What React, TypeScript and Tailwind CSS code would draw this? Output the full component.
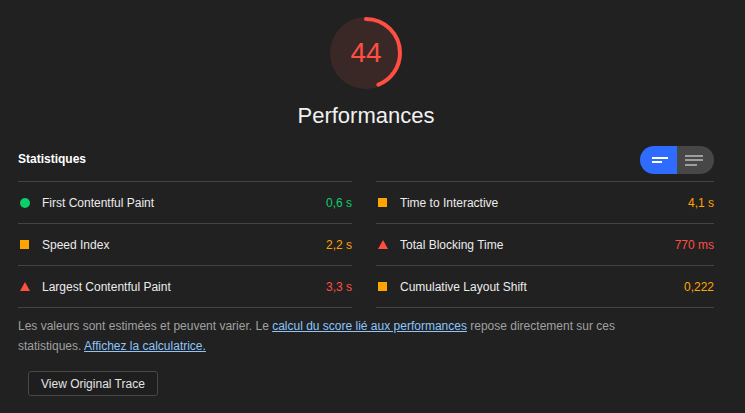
import React from "react";

type Kind = "pass" | "average" | "fail";
const metrics: { label: string; value: string; kind: Kind }[][] = [
  [
    { label: "First Contentful Paint", value: "0,6 s", kind: "pass" },
    { label: "Speed Index", value: "2,2 s", kind: "average" },
    { label: "Largest Contentful Paint", value: "3,3 s", kind: "fail" },
  ],
  [
    { label: "Time to Interactive", value: "4,1 s", kind: "average" },
    { label: "Total Blocking Time", value: "770 ms", kind: "fail" },
    { label: "Cumulative Layout Shift", value: "0,222", kind: "average" },
  ],
];

function Icon({ kind }: { kind: Kind }) {
  if (kind === "pass")
    return <span className="block w-[10px] h-[10px] rounded-full bg-[#0cce6b]" />;
  if (kind === "average")
    return <span className="block w-[9px] h-[9px] bg-[#ffa400]" />;
  return (
    <svg width="10" height="9" viewBox="0 0 10 9" className="block">
      <polygon points="5,0 10,9 0,9" fill="#ff4e42" />
    </svg>
  );
}

const valueColor: Record<Kind, string> = {
  pass: "text-[#0cce6b]",
  average: "text-[#ffa400]",
  fail: "text-[#ff4e42]",
};

export default function App() {
  const r = 34;
  const c = 2 * Math.PI * r;
  return (
    <div
      className="w-[745px] h-[413px] bg-[#212121] text-[#e8e8e8] overflow-hidden"
      style={{ fontFamily: '"Liberation Sans", Arial, sans-serif' }}
    >
      <div className="ml-[18px] w-[696px] pt-[15px]">
        <div className="flex flex-col items-center">
          <div className="relative w-[76px] h-[76px]">
            <svg width="76" height="76" viewBox="0 0 76 76" className="block">
              <circle cx="38" cy="38" r="36" fill="#3a2826" />
              <circle
                cx="38"
                cy="38"
                r={r}
                fill="none"
                stroke="#ff4e42"
                strokeWidth="4"
                strokeLinecap="round"
                strokeDasharray={`${0.44 * c} ${c}`}
                transform="rotate(-90 38 38)"
              />
            </svg>
            <div className="absolute inset-0 flex items-center justify-center text-[28px] leading-none text-[#ff4e42]">
              44
            </div>
          </div>
          <div className="mt-[11px] text-[22px] leading-[28px] text-[#f1f1f1]">Performances</div>
        </div>

        <div className="mt-[16px] flex items-center justify-between h-[28px]">
          <div className="text-[12px] font-bold text-white -mt-[2px]">Statistiques</div>
          <div className="flex h-[28px] w-[74px] rounded-full overflow-hidden">
            <div className="w-[37px] bg-[#2f6bff] flex flex-col justify-center items-start pl-[12px] gap-[2px]">
              <span className="block w-[16px] h-[2px] bg-white" />
              <span className="block w-[10px] h-[2px] bg-white" />
            </div>
            <div className="w-[37px] bg-[#474747] flex flex-col justify-center items-start pl-[8px] gap-[2.5px]">
              <span className="block w-[18px] h-[2px] bg-[#9e9e9e]" />
              <span className="block w-[18px] h-[2px] bg-[#9e9e9e]" />
              <span className="block w-[12px] h-[2px] bg-[#9e9e9e]" />
            </div>
          </div>
        </div>

        <div className="mt-[7px] grid grid-cols-[334px_338px] gap-x-[24px]">
          {metrics.map((col, i) => (
            <div key={i} className="border-b border-[#444]">
              {col.map((m) => (
                <div key={m.label} className="h-[42px] border-t border-[#444] flex items-center text-[12px]">
                  <div className="w-[24px] pl-[2px] flex items-center">
                    <Icon kind={m.kind} />
                  </div>
                  <div className="flex-1 text-[#ececec]">{m.label}</div>
                  <div className={valueColor[m.kind]}>{m.value}</div>
                </div>
              ))}
            </div>
          ))}
        </div>

        <p className="mt-[8px] w-[640px] text-[12px] leading-[20px] text-[#a0a0a0]">
          Les valeurs sont estimées et peuvent varier. Le{" "}
          <a className="text-[#8ec5fa] underline">calcul du score lié aux performances</a> repose directement sur ces
          statistiques. <a className="text-[#8ec5fa] underline">Affichez la calculatrice.</a>
        </p>

        <button className="mt-[15px] ml-[10px] h-[25px] px-[12px] rounded-[3px] border border-[#484848] bg-[#1e1e1e] text-[12px] text-[#e3e3e3]">
          View Original Trace
        </button>
      </div>
    </div>
  );
}
